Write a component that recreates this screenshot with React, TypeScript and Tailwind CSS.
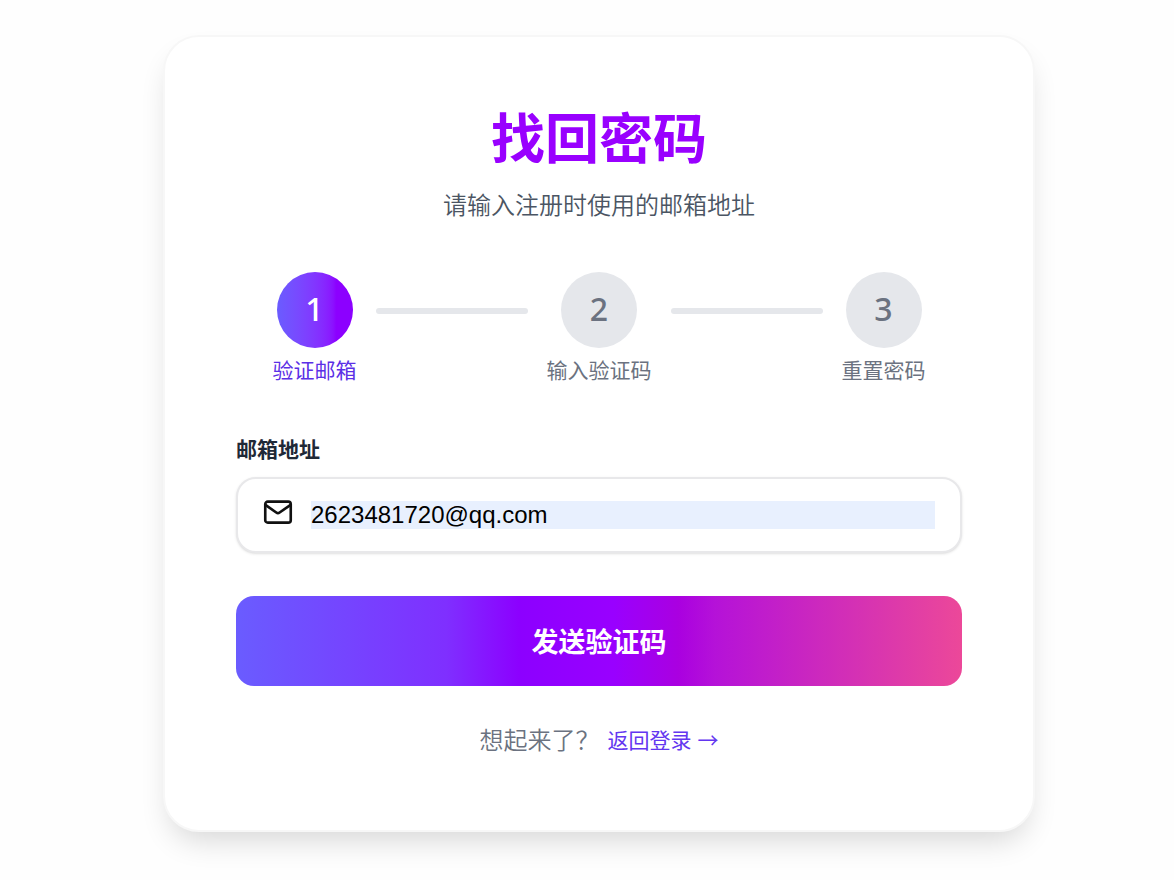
import { Fragment, useState } from "react";

const steps = ["验证邮箱", "输入验证码", "重置密码"];

function MailIcon() {
  return (
    <svg
      className="mb-1.5 size-[30px] shrink-0 text-[#111111]"
      viewBox="0 0 24 24"
      fill="none"
      stroke="currentColor"
      strokeWidth="2.1"
      strokeLinecap="round"
      strokeLinejoin="round"
      aria-hidden="true"
    >
      <rect x="1.8" y="3.7" width="20.4" height="16.8" rx="2" />
      <path d="m21.8 6.5-8.5 5.9a2.3 2.3 0 0 1-2.7 0L2.2 6.5" />
    </svg>
  );
}

function Steps({ current }: { current: number }) {
  return (
    <ol className="mt-[50px] flex items-start justify-center gap-[19px]">
      {steps.map((label, i) => (
        <Fragment key={label}>
          {i > 0 && (
            <li aria-hidden="true" className="mt-9 h-1.5 max-w-[152px] flex-1 rounded-full bg-[#e5e7eb]" />
          )}
          <li className="flex shrink-0 flex-col items-center gap-[5px]">
            <span
              className={
                i === current
                  ? "flex size-[76px] items-center justify-center rounded-full bg-linear-to-r from-[#6a5cff] to-[#8c00ff] to-78% pb-0.5 font-['Noto_Sans','Noto_Sans_CJK_SC',sans-serif] text-[32px] font-medium text-white"
                  : "flex size-[76px] items-center justify-center rounded-full bg-[#e5e7eb] pb-0.5 font-['Noto_Sans','Noto_Sans_CJK_SC',sans-serif] text-[32px] font-medium text-[#6b7280]"
              }
            >
              {i + 1}
            </span>
            <span className={i === current ? "text-[21px] leading-8 text-[#5b30e6]" : "text-[21px] leading-8 text-[#6b7280]"}>
              {label}
            </span>
          </li>
        </Fragment>
      ))}
    </ol>
  );
}

export default function App() {
  const [email, setEmail] = useState("2623481720@qq.com");

  return (
    <main className="flex min-h-screen items-start justify-center bg-[#fefefe] pt-[35px] pb-9 pl-6 font-['Noto_Sans_CJK_SC',sans-serif]">
      <section className="w-full max-w-[872px] rounded-[36px] border-2 border-[#f7f7f7] bg-white px-[71px] py-[73px] shadow-[0_16px_30px_-8px_rgba(0,0,0,0.16)]">
        <h1 className="text-center text-[54px] leading-[52px] font-bold text-[#9900ff]">找回密码</h1>
        <p className="mt-6 text-center text-2xl leading-9 font-[350] text-[#4b5563]">请输入注册时使用的邮箱地址</p>

        <Steps current={0} />

        <form className="mt-[47px]" onSubmit={(e) => e.preventDefault()}>
          <label htmlFor="email" className="block text-[21px] leading-8 font-bold text-[#1f2937]">
            邮箱地址
          </label>
          <div className="mt-[13px] flex h-[76px] items-center gap-[18px] rounded-[20px] border-2 border-[#e8e8ea] bg-white px-[25px] shadow-sm">
            <MailIcon />
            <input
              id="email"
              type="email"
              value={email}
              onChange={(e) => setEmail(e.target.value)}
              className="h-7 min-w-0 flex-1 bg-[#e8f0fe] font-['Liberation_Sans',Arial,sans-serif] text-2xl leading-7 text-black outline-none"
            />
          </div>
          <button
            type="submit"
            className="mt-[43px] h-[90px] w-full rounded-[18px] bg-[linear-gradient(to_right,#6a5cff_0%,#7f2fff_29%,#8c00ff_39%,#9900ff_52%,#aa00e0_61%,#b512d8_66%,#ec4899_100%)] text-[27px] font-bold text-white"
          >
            发送验证码
          </button>
        </form>

        <p className="mt-[35px] flex items-center justify-center gap-2 text-2xl leading-9 font-[350] text-[#6b7280]">
          想起来了？
          <a href="#login" className="flex gap-1.5 text-[21px] font-normal text-[#6336f0]">
            返回登录 <span>→</span>
          </a>
        </p>
      </section>
    </main>
  );
}
